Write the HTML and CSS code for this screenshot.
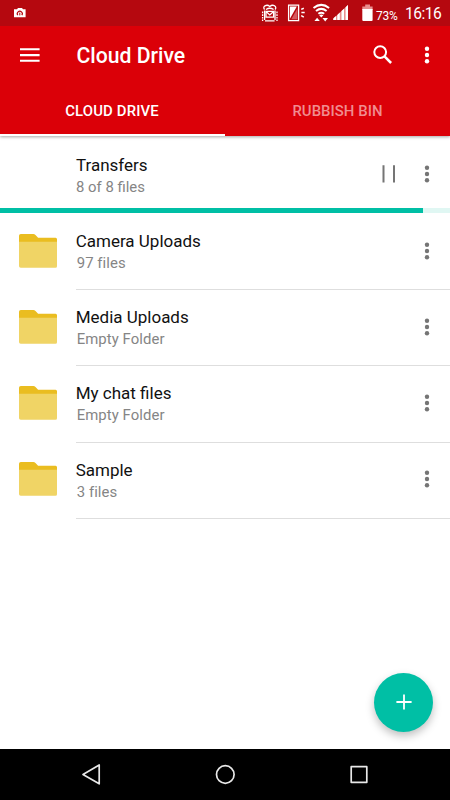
FILE: index.html
```html
<!DOCTYPE html>
<html lang="en">
<head>
<meta charset="utf-8">
<title>Cloud Drive</title>
<link rel="stylesheet" href="styles.css">
</head>
<body>
<svg width="0" height="0" class="defs">
  <symbol id="dots" viewBox="0 0 6 18"><circle cx="3" cy="2.7" r="2.2"/><circle cx="3" cy="9" r="2.2"/><circle cx="3" cy="15.3" r="2.2"/></symbol>
  <symbol id="folder" viewBox="0 0 38 34">
    <path fill="#eabd20" d="M1.8 0H14.3q1.3 0 2.2 1l2.6 2.8H36.6q1.4 0 1.4 1.5V12H0V1.8Q0 0 1.8 0Z"/>
    <path fill="#f0d465" d="M0 7.7H38V32.2Q38 33.7 36.5 33.7H1.7Q0 33.7 0 32Z"/>
  </symbol>
</svg>
<div class="screen">
  <header class="header">
    <div class="status">
      <svg class="camera" width="12" height="10" viewBox="0 0 12 10"><path fill="#fff" d="M0 1.2H3L4 0H8L9 1.2H11.6V9.2H0Z"/><path fill="none" stroke="#b5080f" stroke-width="1.2" d="M3.8 7.2A2.5 2.5 0 1 1 7.8 7.2"/><path stroke="#b5080f" stroke-width="1" d="M5.8 4.6V7.4"/></svg>
      <svg class="status-icons" width="115" height="25" viewBox="260 0 115 25">
        <g fill="none" stroke="#fff" stroke-width="1.3">
          <path d="M264.6 20V10.5M275 20V10.5M264.6 9.5Q262.8 7.4 265 5.8Q267.5 4.5 269.8 6.4Q272.2 4.5 274.5 5.8Q276.8 7.4 275 9.5M266 9.5Q269.8 7 273.6 9.5M265 20.8H274.6"/>
          <path d="M266 11.3H273.6V17.2H266ZM266 11.6L269.8 15L273.6 11.6"/>
          <path stroke-dasharray="1.7 1" d="M262.6 11.5V21M277 11.5V21"/>
          <path d="M288.6 5.1H298.6V20.6H288.6Z"/>
          <path d="M301.2 9.4L303.8 8.2M301.4 12.6H304.7M301.2 15.6L303.8 17.2" stroke-width="1.5"/>
        </g>
        <path fill="#fff" d="M290 6.5H296.8L290 18.5Z"/>
        <path fill="#d65a5e" d="M291.3 19.2L297.4 8.5V19.2Z"/>
        <g fill="none" stroke="#fff" stroke-width="2"><path d="M313.5 8Q321.3 1.8 329.1 8M316 11Q321.3 6.8 326.6 11M318.4 13.8Q321.3 11.6 324.2 13.8"/></g>
        <path fill="#fff" d="M319.2 15.2Q321.3 13.8 323.4 15.2L321.3 17.6ZM314.4 21.1L317.1 17.7L319.8 21.1ZM322.5 17.9H328L325.2 21.4Z"/>
        <path fill="#e98f8f" d="M333 20V19L348 5V20Z"/>
        <path fill="#fff" d="M333.4 20V18.3L336 16V20ZM337.3 20V15L339.8 12.6V20ZM341.5 20V11L344 8.8V20ZM345.6 20V7.2L348 5V20Z"/>
        <path fill="#e98f8f" d="M365.2 4.5H370V6.4H372.6V10H362.3V6.4H365.2Z"/>
        <path fill="#fff" d="M362.3 9H372.6V20Q372.6 21 371.6 21H363.3Q362.3 21 362.3 20Z"/>
      </svg>
      <span class="battery">73%</span><span class="time">16:16</span>
    </div>
    <div class="appbar">
      <svg class="menu" width="20" height="14" viewBox="0 0 20 14"><path stroke="#fff" stroke-width="2.1" d="M0 1.3H19.6M0 7.1H19.6M0 12.8H19.6"/></svg>
      <h1 class="title">Cloud Drive</h1>
      <svg class="search" width="20" height="20" viewBox="0 0 20 20" fill="none" stroke="#fff"><circle cx="7.2" cy="7.1" r="5.9" stroke-width="2"/><path stroke-width="2.5" d="M11.5 11.4L18.1 18"/></svg>
      <svg class="more white" width="6" height="18"><use href="#dots"/></svg>
    </div>
    <nav class="tabs"><div class="tab active">CLOUD DRIVE</div><div class="tab">RUBBISH BIN</div></nav>
  </header>
  <main class="content">
    <section class="row transfers">
      <div class="text"><div class="name">Transfers</div><div class="sub">8 of 8 files</div></div>
      <svg class="pause" width="14" height="18" viewBox="0 0 14 18"><path stroke="#757575" stroke-width="2" d="M1.5 .3V17.6M12 .3V17.6"/></svg>
      <svg class="more" width="6" height="18"><use href="#dots"/></svg>
    </section>
    <div class="progress"><div class="bar"></div></div>
    <section class="row"><svg class="folder" width="38" height="34"><use href="#folder"/></svg><div class="text"><div class="name">Camera Uploads</div><div class="sub">97 files</div></div><svg class="more" width="6" height="18"><use href="#dots"/></svg></section>
    <section class="row"><svg class="folder" width="38" height="34"><use href="#folder"/></svg><div class="text"><div class="name">Media Uploads</div><div class="sub">Empty Folder</div></div><svg class="more" width="6" height="18"><use href="#dots"/></svg></section>
    <section class="row"><svg class="folder" width="38" height="34"><use href="#folder"/></svg><div class="text"><div class="name">My chat files</div><div class="sub">Empty Folder</div></div><svg class="more" width="6" height="18"><use href="#dots"/></svg></section>
    <section class="row"><svg class="folder" width="38" height="34"><use href="#folder"/></svg><div class="text"><div class="name">Sample</div><div class="sub">3 files</div></div><svg class="more" width="6" height="18"><use href="#dots"/></svg></section>
    <div class="fab"><svg width="16" height="16" viewBox="0 0 16 16"><path stroke="#fff" stroke-width="1.8" d="M.4 8H15.6M8 .4V15.6"/></svg></div>
  </main>
  <footer class="navbar">
    <svg width="450" height="51" viewBox="0 0 450 51" fill="none" stroke="#e8e8e8" stroke-width="1.7" stroke-linejoin="round"><path d="M83 25.4L99.2 16V34.8Z"/><circle cx="225.3" cy="25.5" r="8.8"/><rect x="351.2" y="17.7" width="15.6" height="15.6"/></svg>
  </footer>
</div>
</body>
</html>
```
FILE: styles.css
```css
* { box-sizing: border-box; }
body { margin: 0; background: #fff; font-family: Roboto, "Liberation Sans", sans-serif; }
svg { display: block; flex: none; }
.defs { position: absolute; }
.screen { width: 450px; height: 800px; display: flex; flex-direction: column; overflow: hidden; }
.header { height: 136px; flex: none; background: #db0008; box-shadow: 0 1px 3px rgba(0,0,0,.35); z-index: 1; }
.status { height: 25.5px; background: #b5080f; color: #fff; display: flex; padding-left: 13.5px; }
.camera { margin-top: 8px; }
.status-icons { margin-left: 234.5px; }
.battery { width: 29px; margin-left: 1px; font-size: 12px; line-height: 32px; letter-spacing: -.2px; }
.time { font-size: 15.6px; line-height: 28px; white-space: nowrap; letter-spacing: -.5px; }
.appbar { height: 60.5px; display: flex; align-items: center; padding: 0 20.5px 0 20px; }
.menu { width: 20px; margin-bottom: 1px; }
.title { flex: 1; margin: 0 0 0 36.5px; color: #fff; font-size: 21.2px; line-height: 28px; font-weight: 500; }
.search { margin: 0 31px 1.5px 0; }
.more { fill: #757575; }
.more.white { fill: #fff; margin-bottom: 2px; }
.tabs { height: 50px; display: flex; }
.tab { width: 225px; text-align: center; font-size: 14.9px; line-height: 50px; font-weight: 500; color: #f08c90; height: 50px; letter-spacing: .05px; }
.tab.active { color: #fff; border-bottom: 2px solid #fff; padding-right: 1px; letter-spacing: .15px; }
.content { flex: 1; position: relative; background: #fff; }
.row { height: 76.2px; display: flex; align-items: center; padding: 0 20.5px 0 18.7px; }
.row > svg { margin-bottom: 3px; }
.row.transfers { height: 72px; padding-left: 57px; padding-top: 3px; }
.text { flex: 1; height: 100%; margin-left: 19px; padding-top: 16px; border-bottom: 1px solid #dedede; margin-right: -26.5px; }
.transfers .text { padding-top: 15px; border: 0; margin-right: 0; }
.name { font-size: 17px; line-height: 22px; color: #111; }
.sub { font-size: 14.9px; line-height: 22px; color: #858585; padding-left: 1px; letter-spacing: .07px; }
.transfers .sub { padding-left: 0; letter-spacing: 0; }
.row.transfers > svg { margin-bottom: 0; }
.row > .pause { margin-right: 28px; }
.progress { height: 4.5px; margin-bottom: 1.5px; background: #e0f7f3; }
.bar { width: 423px; height: 4.5px; background: #00bfa5; }
.fab { position: absolute; left: 374px; top: 536.5px; width: 59px; height: 59px; border-radius: 50%; background: #00bfa5; display: flex; align-items: center; justify-content: center; box-shadow: 0 4px 8px rgba(0,0,0,.25); }
.navbar { height: 51px; flex: none; background: #000; }
```
